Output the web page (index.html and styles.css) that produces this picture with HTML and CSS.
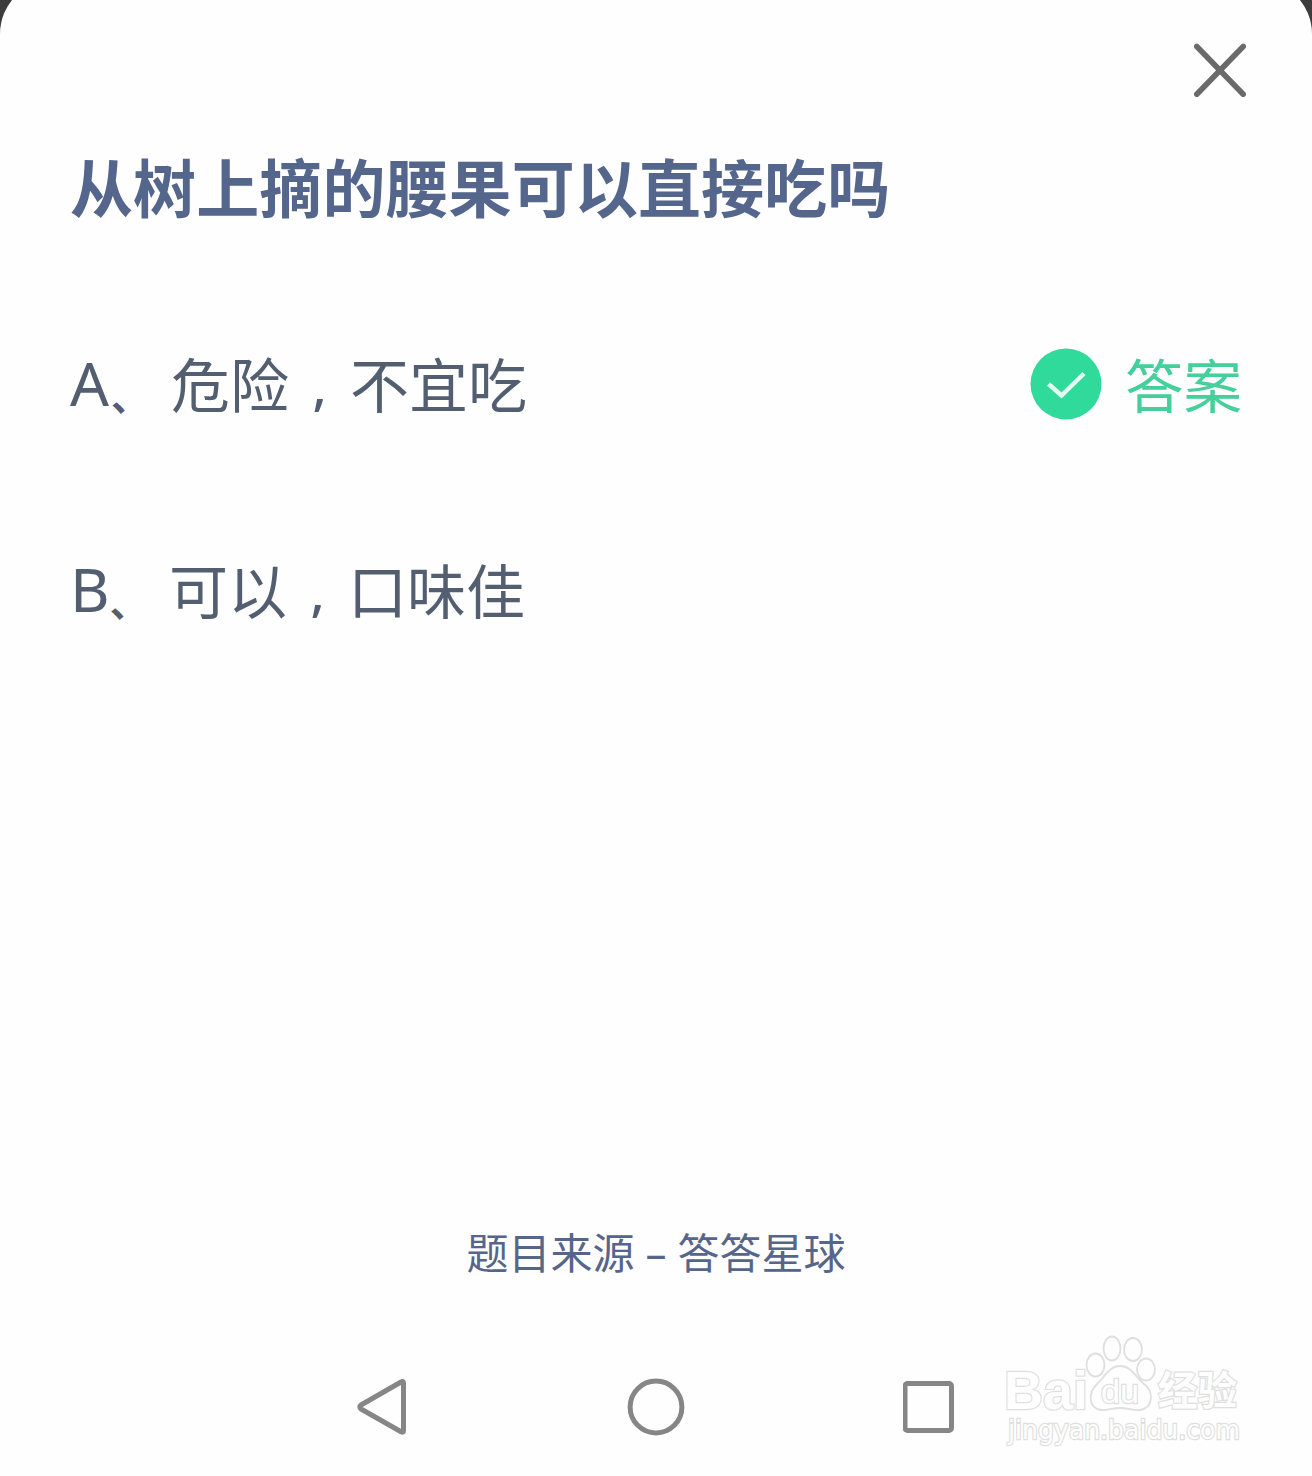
FILE: index.html
```
<!DOCTYPE html>
<html lang="zh-CN">
<head>
    <meta charset="UTF-8">
    <meta name="viewport" content="width=device-width, initial-scale=1.0">
    <title>从树上摘的腰果可以直接吃吗</title>
    <link rel="stylesheet" href="styles.css">
</head>
<body>
    <div class="sheet">
        <div class="top-bar">
            <svg class="close" width="52" height="54" viewBox="0 0 52 54">
                <path d="M2.8 3.500L49.2 51.200M49.2 3.500L2.8 51.200"/>
            </svg>
        </div>

        <h1>从树上摘的腰果可以直接吃吗</h1>

        <div class="options">
            <div class="option">
                <span class="text"><span class="label">A<span class="mark">、</span></span>危险<span class="comma">,</span>不宜吃</span>
                <span class="answer">
                    <svg class="check" width="72" height="72" viewBox="0 0 72 72">
                        <circle cx="36" cy="36" r="35.5"/>
                        <path d="M18.500 36L31.500 47.500L54 25.500"/>
                    </svg>
                    答案
                </span>
            </div>
            <div class="option">
                <span class="text"><span class="label label-b">B<span class="mark">、</span></span>可以<span class="comma">,</span>口味佳</span>
            </div>
        </div>

        <p class="source">题目来源 – 答答星球</p>

        <div class="nav-bar">
            <svg width="50" height="58" viewBox="0 0 50 58">
                <path d="M45 3.600Q46.500 3.600 46.500 5.500V52.500Q46.500 54.700 44.500 54L4 31Q1.500 29 4 27L44 4Z"/>
            </svg>
            <svg class="home" width="58" height="58" viewBox="0 0 58 58">
                <circle cx="30" cy="29" r="25.900"/>
            </svg>
            <svg width="52" height="58" viewBox="0 0 52 58">
                <rect x="2" y="5.500" width="46.500" height="47" rx="2.500"/>
            </svg>
        </div>

        <!-- watermark -->
        <svg class="watermark" width="250" height="130" viewBox="0 0 250 130">
            <g class="outline">
                <text class="bai" x="4" y="83" textLength="84" lengthAdjust="spacingAndGlyphs">Bai</text>
                <ellipse cx="95.500" cy="39" rx="9" ry="11.500"/>
                <ellipse cx="112" cy="22.500" rx="8.500" ry="12"/>
                <ellipse cx="133" cy="23.500" rx="9" ry="11.500"/>
                <ellipse cx="146" cy="43.500" rx="9" ry="11"/>
                <path d="M120 40C131 40 135 50 143 57C155 66 153 82 140 84C134 85 128 82 120 82C112 82 107 85 101 84C88 82 88 67 97 58C105 51 109 40 120 40Z"/>
                <text class="du" x="101" y="77" textLength="38" lengthAdjust="spacingAndGlyphs">du</text>
                <text class="jingyan" x="158" y="79" textLength="79" lengthAdjust="spacingAndGlyphs">经验</text>
                <text class="url" x="8" y="113" textLength="232" lengthAdjust="spacingAndGlyphs">jingyan.baidu.com</text>
            </g>
        </svg>
    </div>
</body>
</html>
```
FILE: styles.css
```
body {
    margin: 0;
    background: #3c3c3c;
    font-family: 'Noto Sans', 'Noto Sans CJK SC', sans-serif;
}

.sheet {
    position: relative;
    display: flex;
    flex-direction: column;
    box-sizing: border-box;
    height: 1476px;
    overflow: hidden;
    background: #fefefe;
    clip-path: inset(-20px 0 0 0 round 54px 54px 0 0);
}

.top-bar {
    display: flex;
    justify-content: flex-end;
    padding: 43px 66px 0 0;
}

.close {
    fill: none;
    stroke: #6a6a6a;
    stroke-width: 5.6;
    stroke-linecap: round;
}

h1 {
    margin: 45px 70px 0;
    font-size: 63px;
    line-height: 92px;
    font-weight: 700;
    letter-spacing: 0.1px;
    color: #54668c;
}

.options {
    margin: 98px 70px 0;
}

.option {
    display: flex;
    justify-content: space-between;
    align-items: center;
    height: 106px;
    margin-bottom: 100px;
    font-size: 59px;
    line-height: 106px;
    color: #535f70;
}

.text {
    display: flex;
    height: 106px;
}

.label {
    display: flex;
    width: 101px;
    font-size: 61px;
    line-height: 101px;
}

.label-b {
    width: 99px;
}

.mark {
    margin-left: 2px;
    font-size: 38px;
    font-weight: 700;
    line-height: 128px;
}

.label-b .mark {
    margin-left: 0;
}

.comma {
    width: 61px;
    font-size: 52px;
    font-weight: 500;
    text-align: center;
}

.answer {
    display: flex;
    align-items: center;
    gap: 23px;
    color: #45cf9b;
    font-size: 58.5px;
}

.check {
    margin-bottom: 2px;
}

.check circle {
    fill: #2fda9b;
}

.check path {
    fill: none;
    stroke: #e4fff4;
    stroke-width: 4.5;
}

.source {
    margin: auto 0 0;
    font-size: 42px;
    line-height: 60px;
    text-align: center;
    color: #56658a;
}

.nav-bar {
    display: flex;
    justify-content: space-between;
    width: 598px;
    margin: 95px 0 40px 357px;
}

.nav-bar svg {
    fill: none;
    stroke: #868686;
    stroke-width: 5;
    stroke-linejoin: round;
}

.nav-bar .home {
    overflow: visible;
}

/* Watermark */
.watermark {
    position: absolute;
    left: 1000px;
    top: 1326px;
}

.outline {
    fill: #fefefe;
    stroke: #dfdfdf;
    stroke-width: 1.8;
}

.outline text {
    paint-order: stroke;
    stroke-width: 2.4;
}

.bai {
    font: 700 54px 'Liberation Sans', sans-serif;
}

.du {
    font: 400 34px 'Liberation Sans', sans-serif;
}

.jingyan {
    font: 700 40px 'Noto Sans CJK SC', sans-serif;
}

.url {
    font: 400 26px 'DejaVu Sans', sans-serif;
}
```
